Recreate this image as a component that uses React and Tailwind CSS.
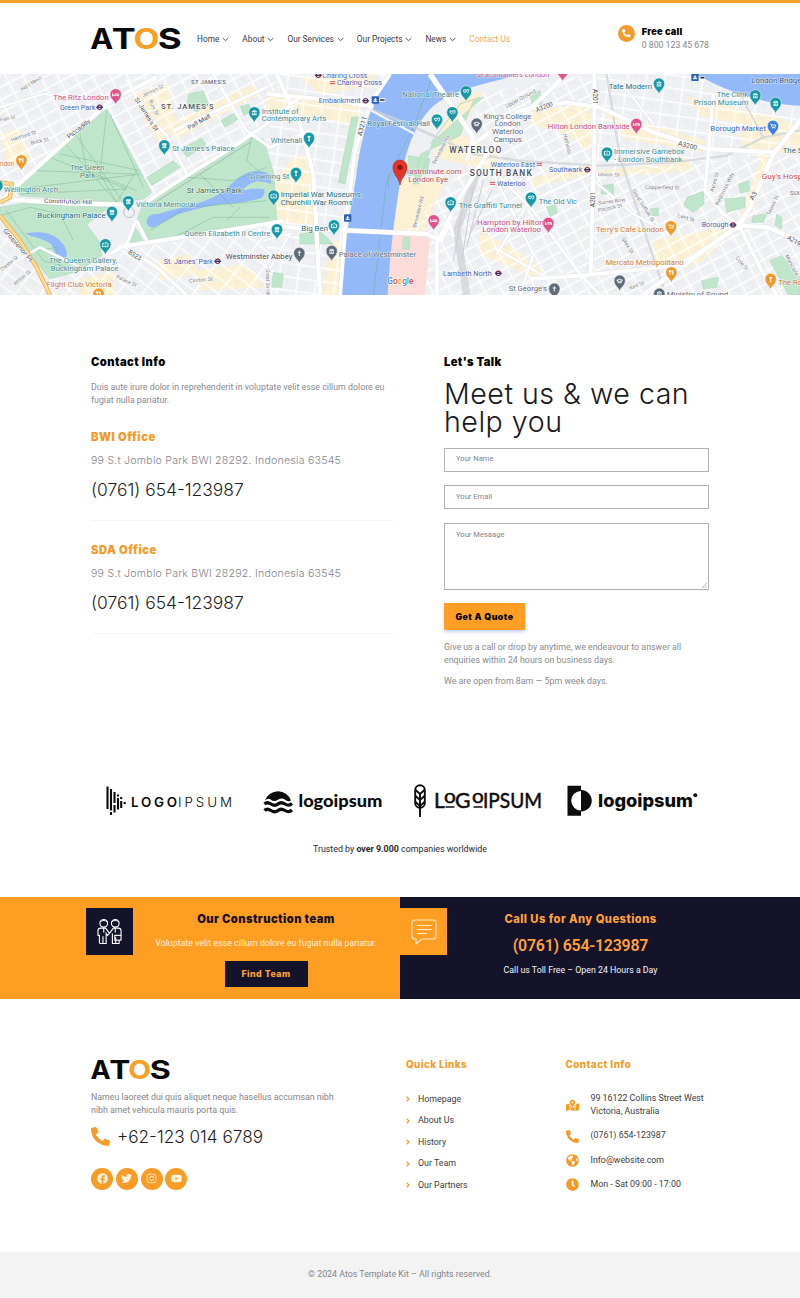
import React from "react";
import {
  FaPhoneAlt, FaMapMarkedAlt, FaGlobeAmericas, FaClock, FaFacebook,
  FaTwitter, FaInstagram, FaYoutube, FaAngleRight,
} from "react-icons/fa";

const ORANGE = "#f79f26";
const SANS = "Roboto, sans-serif";

/* ---------- Brand ---------- */

function AtosLogo({ className }) {
  return (
    <svg viewBox="0 0 90 22" className={`overflow-visible ${className}`} preserveAspectRatio="none">
      <g fontFamily="Inter, sans-serif" fontWeight="650" fontSize="29">
        <text x="-0.7" y="21.3" textLength="23" lengthAdjust="spacingAndGlyphs" fill="#0a0a0c">A</text>
        <text x="20.8" y="21.3" textLength="24" lengthAdjust="spacingAndGlyphs" fill="#0a0a0c">T</text>
        <text x="42.4" y="21.3" textLength="26" lengthAdjust="spacingAndGlyphs" fill={ORANGE}>O</text>
        <text x="66.8" y="21.3" textLength="24" lengthAdjust="spacingAndGlyphs" fill="#0a0a0c">S</text>
      </g>
    </svg>
  );
}

const NAV = ["Home", "About", "Our Services", "Our Projects", "News"];

function Header() {
  return (
    <header className="flex h-[74px] items-start border-t-[3px] border-[#f5a127] bg-white pl-[91px]">
      <AtosLogo className="mt-[25px] h-[22px] w-[90px]" />
      <nav className="mt-[29px] ml-4 flex h-[14px] items-center gap-[13px] text-[8.3px] leading-[14px] text-[#38383a]">
        {NAV.map((n) => (
          <span key={n} className="flex items-center gap-[3px]">
            {n}
            <svg viewBox="0 0 7 5" className="h-[5px] w-[7px]" fill="none" stroke="#444" strokeWidth=".9">
              <path d="M.7 1 3.5 3.7 6.3 1" />
            </svg>
          </span>
        ))}
        <span className="text-[#f0ae5c]">Contact Us</span>
      </nav>
      <div className="mt-[22px] ml-auto mr-[91px] flex gap-[7px]">
        <span className="flex size-[17px] items-center justify-center rounded-full bg-[#f29b2e] text-white">
          <FaPhoneAlt size={8.5} />
        </span>
        <div>
          <p className="h-[14px] font-['Inter'] text-[9.2px] leading-[14px] font-black tracking-[.25px] text-black">Free call</p>
          <p className="h-[13px] text-[8.7px] leading-[13px] text-[#85858a]">0 800 123 45 678</p>
        </div>
      </div>
    </header>
  );
}

/* ---------- Map ---------- */

const TEAL = "#1a97a5";
const TEALT = "#3b8c96";
const GREY = "#5f6b78";
const PINK = "#e0508a";
const AMBER = "#f0982a";

const PARKS = [
  "320,105 455,355 430,375 345,385 60,365 45,338",
  "0,400 70,388 325,400 262,452 300,505 305,545 240,590 150,615 128,590 0,425",
  "430,385 755,185 790,195 822,300 830,440 640,468 445,498 412,435",
  "400,450 430,500 385,505",
  "565,60 610,50 625,90 590,115 562,90",
  "663,140 705,115 715,135 675,160",
  "440,310 520,260 540,280 455,335",
  "545,225 605,192 618,212 560,250",
  "722,98 745,90 755,115 730,122",
  "1055,130 1075,128 1035,330 1015,325",
  "900,480 960,470 1000,510 900,510",
  "820,595 850,600 845,640 815,640",
  "1225,245 1290,255 1280,300 1225,305",
  "1210,490 1230,490 1228,525 1208,525",
  "1805,335 1840,330 1840,360 1803,360",
  "2060,370 2110,352 2112,390 2080,415 2052,395",
  "2175,375 2235,370 2235,400 2180,415",
  "2215,330 2245,320 2250,350 2222,358",
  "2310,560 2345,545 2400,610 2400,663 2365,663",
  "1590,60 1620,50 1628,100 1600,112",
  "1640,400 1665,390 1672,415 1650,428",
  "1950,405 1975,402 1975,425 1952,425",
  "2105,620 2155,610 2150,640 2110,645",
  "2260,425 2300,420 2290,445 2255,445",
  "2330,420 2345,430 2345,465 2325,455",
  "1380,185 1420,80 1450,70 1300,200 1255,330 1240,330 1262,240",
];

const SHOPS = [
  "395,60 500,30 535,160 480,210 440,150",
  "500,150 720,50 760,30 780,60 520,200",
  "800,50 1090,80 1060,160 960,130 800,110",
  "900,10 1130,0 1100,40 960,60",
  "880,250 935,240 945,450 810,450 815,330",
  "990,500 1040,500 1025,663 965,663",
  "1200,315 1330,330 1270,480 1180,480",
  "1400,60 1450,50 1380,180 1500,240 1480,290 1300,250 1330,150",
  "1440,470 1540,520 1640,600 1600,610 1440,540",
  "1590,110 1760,90 1790,180 1760,230 1700,180 1590,150",
  "1810,110 2120,200 2110,235 1880,195",
  "1780,290 2010,270 2060,250 2080,290 1800,310",
  "2050,60 2110,80 2330,130 2400,160 2400,240 2220,230 2240,150 2110,130",
  "1600,340 1770,300 1780,270 1600,310",
  "2210,180 2350,190 2250,430 2215,440 2280,260",
  "1960,500 2220,450 2110,560 2020,600 1960,560",
  "470,560 560,540 600,600 480,620",
  "220,620 340,590 345,663 240,663",
  "0,180 60,160 90,250 20,280",
  "580,590 730,570 800,640 600,650",
];

const ROADS = [
  ["0,385 40,345 210,190 330,80 470,10", 13],
  ["30,376 200,388 380,392", 13],
  ["440,385 520,330 690,225 800,150 900,70", 11],
  ["380,15 430,110 500,185 560,300", 9],
  ["520,170 800,40", 10],
  ["355,520 480,500 800,450 850,440", 12],
  ["408,440 380,510 330,540", 10],
  ["410,440 440,500", 9],
  ["370,515 470,580 560,663", 10],
  ["640,0 740,170 810,220 930,170", 9],
  ["830,0 900,150 940,300 950,480 960,663", 13],
  ["1170,0 1110,90 1065,230 1035,470 1020,663", 11],
  ["800,455 945,465 1280,480 1330,500", 13],
  ["800,60 1020,80 1120,100", 12],
  ["1310,663 1310,510 1380,370 1480,210 1700,0", 13],
  ["1290,0 1420,190 1400,260", 15],
  ["1420,210 1560,110 1700,85 1800,100", 13],
  ["1800,100 1960,175 2120,225 2330,235", 13],
  ["1783,0 1783,200 1772,600", 12],
  ["2140,60 2115,350 2170,420 2220,455", 11],
  ["2400,140 2320,240 2250,400 2220,450 1930,663", 14],
  ["2220,455 2300,460 2400,500", 13],
  ["2220,460 2290,600 2330,663", 11],
  ["1590,615 1740,605 2030,575", 12],
  ["1500,310 1600,410 1740,600 1800,663", 9],
  ["1480,300 1600,540 1560,663", 8],
  ["1770,300 1590,380 1490,540", 8],
  ["1770,310 1900,420 2010,480", 7],
  ["0,590 120,520 280,600", 7],
  ["0,100 130,60 330,80", 7],
  ["790,500 870,480 800,600", 7],
  ["1320,505 1350,450 1360,490", 10],
  ["1480,520 1640,610", 8],
  ["2030,575 2120,520 2220,460", 9],
  ["1860,20 1960,150", 7],
];

const RAILS = [
  ["1590,262 1800,275 2020,265 2180,245 2290,190 2400,170", 7],
  ["1820,0 1860,250 1910,400 1990,640", 7],
  ["1070,90 1200,140 1420,240 1590,265", 8],
  ["1430,300 1370,470 1400,663", 22],
  ["2220,60 2290,190", 5],
];

const PATHS = [
  "320,110 300,300 350,385", "180,240 420,290", "230,185 370,385", "110,290 400,300",
  "60,345 420,300", "240,180 260,290 410,350", "330,120 430,340", "150,250 380,345 60,360",
  "200,215 350,385", "410,290 350,385", "450,470 560,400 800,380", "560,310 700,320 800,280",
  "520,490 640,430 810,430", "755,190 740,260 820,330", "600,300 700,400", "0,425 90,400 180,420 220,500",
  "20,410 130,560 240,590", "110,530 170,520 180,590", "720,400 680,440", "1300,0 1240,160 1160,320 1120,663",
  "1440,70 1380,90 1290,210", "1165,345 1165,305 1205,305",
];

// [text, x, y, width, colour, size, wide]: "wide" districts stretch by spacing only
const LABELS = [
  ["The Ritz London", 160, 78, 166, "#c94a83"],
  ["Green Park", 180, 108, 106, "#4b62ad", 21],
  ["ST. JAMES'S", 483, 104, 158, "#4d5360", 23, true],
  ["ST JAMES'S", 573, 30, 105, "#6a6f78", 18, true],
  ["St James's Palace", 516, 231, 188, TEALT],
  ["The Green", 211, 289, 102, "#4f8064"],
  ["Park", 240, 312, 46, "#4f8064"],
  ["St James's Park", 560, 358, 166, "#356b4c"],
  ["Wellington Arch", 12, 355, 162, TEALT],
  ["Victoria Memorial", 408, 400, 178, TEALT],
  ["Buckingham Palace", 112, 431, 205, "#256c78"],
  ["The Queen's Gallery,", 147, 567, 204, TEALT],
  ["Buckingham Palace", 152, 590, 203, TEALT],
  ["Flight Club Victoria", 140, 639, 195, "#cf7d33"],
  ["Queen Elizabeth II Centre", 553, 485, 258, TEALT],
  ["St. James' Park", 491, 570, 148, "#4b62ad"],
  ["Westminster Abbey", 677, 555, 200, "#414b58"],
  ["ndon", 0, 276, 42, "#cf7d33"],
  ["Institute of", 785, 119, 111, TEALT],
  ["Contemporary Arts", 785, 142, 194, TEALT],
  ["Whitehall", 812, 207, 94, TEALT],
  ["Downing St", 751, 315, 117, TEALT],
  ["Imperial War Museums,", 842, 370, 245, "#1e6f7b"],
  ["Churchill War Rooms", 842, 394, 216, "#1e6f7b"],
  ["Big Ben", 904, 471, 80, "#1e6f7b"],
  ["Palace of Westminster", 1016, 548, 232, GREY],
  ["Charing Cross", 967, 11, 135, "#5268ad", 21],
  ["Charing Cross", 1011, 33, 135, "#4b62ad", 21],
  ["Embankment", 956, 87, 126, "#4b62ad", 22],
  ["National Theatre", 1207, 69, 170, TEALT],
  ["Royal Festival Hall", 1102, 157, 188, "#2d8396"],
  ["Seacontainers London", 1428, 9, 220, "#d05088"],
  ["King's College", 1451, 134, 143, GREY],
  ["London", 1484, 157, 78, GREY],
  ["Waterloo", 1476, 180, 94, GREY],
  ["Campus", 1481, 203, 84, GREY],
  ["WATERLOO", 1348, 238, 156, "#474c58", 25, true],
  ["SOUTH BANK", 1409, 307, 186, "#474c58", 25, true],
  ["Waterloo East", 1472, 278, 133, "#4b62ad", 21],
  ["Waterloo", 1491, 335, 86, "#4b62ad", 21],
  ["lastminute.com", 1221, 301, 164, "#b84e49"],
  ["London Eye", 1225, 325, 119, "#b84e49"],
  ["The Graffiti Tunnel", 1376, 402, 190, TEALT],
  ["Hampton by Hilton", 1431, 452, 200, "#c94a83"],
  ["London Waterloo", 1447, 475, 176, "#c94a83"],
  ["The Old Vic", 1616, 389, 115, TEALT],
  ["Lambeth North", 1329, 605, 146, "#4b62ad", 22],
  ["St George's", 1526, 652, 115, GREY],
  ["Cathedral, Southwark", 1425, 677, 230, GREY],
  ["Tate Modern", 1826, 46, 130, "#1e6f7b"],
  ["Hilton London Bankside", 1643, 166, 246, "#c94a83"],
  ["Immersive Gamebox", 1842, 241, 211, TEALT],
  ["- London Southbank", 1842, 264, 205, TEALT],
  ["Southwark", 1647, 294, 100, "#4b62ad", 22],
  ["The Clink", 2150, 70, 94, TEALT],
  ["Prison Museum", 2081, 93, 164, TEALT],
  ["London Bridge", 2254, 28, 150, "#384f6b"],
  ["Borough Market", 2131, 171, 167, "#3567c8"],
  ["The Shard", 2348, 238, 106, "#1e6f7b"],
  ["Guy's Hospital", 2285, 316, 155, "#c55055"],
  ["SOUTHWARK", 2370, 362, 110, "#6a6f78", 17],
  ["Borough", 2105, 460, 80, "#4b62ad", 22],
  ["Terry's Cafe London", 1788, 475, 203, "#cf7d33"],
  ["Mercato Metropolitano", 1817, 572, 234, "#cf7d33"],
  ["The Royal", 2335, 633, 100, "#cf7d33"],
  ["Ministry of Sound", 2000, 668, 185, GREY],
];

// [text, x, y, width, size, rotation]
const STREETS = [
  ["Piccadilly", 208, 195, 82, 20, -38], ["St James's St", 403, 76, 115, 19, 57],
  ["Pall Mall", 567, 168, 76, 19, -30], ["Constitution Hill", 132, 386, 144, 18, 2],
  ["Grosvenor Pl", 8, 470, 125, 19, 49], ["B323", 383, 538, 42, 20, 32],
  ["Hertford St", 35, 203, 78, 16, -18], ["Brick St", 93, 212, 55, 16, -12],
  ["Ivan St", 0, 142, 48, 16, -10], ["Hay's Mews", 65, 52, 72, 16, -32],
  ["Jermyn St", 430, 70, 68, 16, -26], ["Bury St", 446, 80, 50, 16, 65],
  ["Chester St", 5, 592, 64, 16, -38], ["Wilton St", 46, 635, 62, 16, -40],
  ["Palace St", 347, 612, 66, 16, 24], ["Caxton St", 567, 626, 72, 16, -5],
  ["Great Smith", 798, 585, 80, 16, 90], ["A3211", 1085, 187, 60, 20, -75],
  ["Belvedere Rd", 1305, 272, 95, 16, -62], ["Belvedere Rd", 1248, 462, 96, 16, -76],
  ["Upper Ground", 1520, 102, 100, 17, -28], ["A3200", 1610, 115, 54, 20, -22],
  ["A201", 1780, 45, 46, 19, 90], ["A201", 1784, 400, 46, 19, -90],
  ["A3200", 2033, 214, 58, 20, 14], ["Hatfields", 1690, 180, 64, 16, 78],
  ["Union St", 1793, 306, 66, 16, 2], ["Copperfield St", 1935, 345, 104, 16, 1],
  ["Surrey Row", 1795, 392, 82, 16, -7], ["Pocock St", 1795, 414, 74, 16, -12],
  ["Great Suffolk St", 1896, 350, 112, 16, 58], ["Lant St", 2032, 428, 52, 16, 18],
  ["Ayres St", 2140, 354, 60, 16, -74], ["Redcross Way", 2155, 395, 108, 16, -64],
  ["A3", 2260, 380, 26, 20, -62], ["Tennis St", 2310, 425, 64, 16, -66],
  ["Silex St", 1864, 494, 54, 16, 58], ["Keit St", 1890, 648, 48, 16, -22],
  ["Cole St", 2206, 552, 50, 16, 50], ["A2198", 2360, 494, 54, 20, 32],
  ["Manciple St", 2355, 545, 90, 16, 62],
];

// [x, tip y, colour, glyph]
const PINS = [
  [347, 92, PINK, "bed"], [493, 245, TEAL, "fort"], [64, 290, AMBER, "food"],
  [763, 146, TEAL, "mus"], [385, 413, TEAL, "fort"], [336, 445, TEAL, "fort"],
  [316, 542, TEAL, "cam"], [-8, 365, TEAL, "fort"], [296, 690, AMBER, "food"],
  [927, 223, TEAL, "tower"], [888, 328, TEAL, "tower"], [821, 396, TEAL, "cam"],
  [1002, 485, TEAL, "cam"], [831, 497, TEAL, "fort"], [898, 568, GREY, "cross"],
  [995, 562, GREY, "mus"], [1398, 83, TEAL, "mask"], [1357, 146, TEAL, "mask"],
  [1311, 168, TEAL, "mask"], [1430, 180, GREY, "cap"], [1352, 416, TEAL, "cam"],
  [1301, 470, PINK, "bed"], [1593, 402, TEAL, "mask"], [1645, 478, PINK, "bed"],
  [1688, 22, PINK, "bed"], [1977, 60, TEAL, "mus"], [1909, 181, PINK, "bed"],
  [1821, 267, TEAL, "cam"], [2266, 95, TEAL, "mus"], [2327, 118, TEAL, "mus"],
  [2319, 187, "#3f7de0", "cart"], [2013, 488, AMBER, "cart"], [2014, 626, AMBER, "food"],
  [1859, 651, GREY, "cap"], [1663, 675, GREY, "cross"], [1978, 690, GREY, "mus"],
  [2312, 646, AMBER, "tower"],
];

const GLYPHS = {
  bed: "M-9 -5V5M-9 2H9V-2H-3M9 2V5",
  fort: "M-6 -6H6V-3H-6ZM-4 -3V4M4 -3V4M-7 6H7M0 -3V5",
  food: "M-4 -8V7M-7 -8V-3H-1V-8M5 7V-7Q2 -5 2 0H5",
  mus: "M-7 -3 0 -7 7 -3ZM-5 0V5M0 0V5M5 0V5M-7 6H7",
  cam: "M-8 -4H-3L-1 -6H3L4 -4H8V6H-8ZM0 -1V3",
  tower: "M0 -8V7M-5 -5H5M-3 -2H3M-3 7H3",
  cross: "M0 -8V8M-5 -3H5",
  mask: "M-7 0V-5H1V0Q-3 5 -7 0M2 -6H8V0Q6 4 3 3",
  cap: "M-9 -2 0 -6 9 -2 0 2ZM-5 1V5H5V1",
  cart: "M-8 -6H-5L-3 3H6L8 -4H-4M-2 6H0M5 6H7",
};

function Pin({ x, y, color, glyph }) {
  return (
    <g transform={`translate(${x} ${y - 30})`}>
      <path d="M0 31C-2 18-17 15-17-1A17 17 0 0 1 17-1C17 15 2 18 0 31Z" fill={color} stroke="#fff" strokeWidth="1.5" />
      <path d={GLYPHS[glyph]} fill="none" stroke="#f2fbfb" strokeWidth="2.8" />
    </g>
  );
}

function Roundel({ x, y }) {
  return (
    <g transform={`translate(${x} ${y})`}>
      <circle r="6.5" fill="#f3e8ee" stroke="#7b2950" strokeWidth="3.4" />
      <path d="M-10 0H10" stroke="#2f3566" strokeWidth="4" />
    </g>
  );
}

function MapBanner() {
  return (
    <svg viewBox="0 0 2400 663" className="block h-[221px] w-full bg-[#eef0f3]" preserveAspectRatio="none" fontFamily={SANS}>
      <defs>
        <pattern id="g1" width="46" height="34" patternUnits="userSpaceOnUse" patternTransform="rotate(-28)">
          <path d="M0 2H46M12 2V34" stroke="#fff" strokeWidth="4" />
          <path d="M30 12H40V24" stroke="#e2e5ea" strokeWidth="2" fill="none" />
        </pattern>
        <pattern id="g2" width="56" height="40" patternUnits="userSpaceOnUse" patternTransform="rotate(8)">
          <path d="M0 2H56M18 2V40" stroke="#fff" strokeWidth="4" />
          <path d="M28 14H46V30" stroke="#e2e5ea" strokeWidth="2" fill="none" />
        </pattern>
        <pattern id="g3" width="60" height="38" patternUnits="userSpaceOnUse" patternTransform="rotate(38)">
          <path d="M0 2H60M22 2V38" stroke="#fff" strokeWidth="4" />
          <path d="M34 14H50V26" stroke="#e2e5ea" strokeWidth="2" fill="none" />
        </pattern>
      </defs>
      <rect width="2400" height="663" fill="#eef0f3" />
      {SHOPS.map((p) => <polygon key={p} points={p} fill="#fcf1d3" />)}
      <path d="M0 0H840L800 150 440 385 45 345 0 385Z" fill="url(#g1)" />
      <path d="M0 430 150 615 300 540 830 450 830 663H0Z" fill="url(#g3)" />
      <path d="M840 0H1170L1020 663H800V200Z" fill="url(#g2)" />
      <path d="M1430 60 1780 0V663H1180L1210 480 1420 250Z" fill="url(#g1)" />
      <path d="M1780 0H2140L2400 110V240L1780 300Z" fill="url(#g2)" />
      <path d="M1780 300 2400 240V663H1780Z" fill="url(#g1)" />
      <path d="M1178 480 1290 490 1275 663H1160Z" fill="#fbdcd9" />
      {PARKS.map((p) => <polygon key={p} points={p} fill="#bfe5cb" stroke="#a6d5b5" strokeWidth="1.5" />)}
      <path d="M300 420 380 400 410 440 385 505 320 530 262 452Z" fill="#eef0f3" />
      <g fill="#94b9f8">
        <path d="M1170 0C1120 70 1085 170 1068 310C1050 420 1030 540 1022 663H1163C1168 560 1182 440 1198 340C1215 230 1250 120 1330 75C1400 35 1470 28 1560 0Z" />
        <path d="M2085 0C2150 35 2200 55 2260 72C2310 88 2360 94 2400 95V0Z" />
        <path d="M440 445Q440 418 475 420C540 400 600 390 640 370C690 345 720 290 770 292Q800 290 812 306V330Q790 320 770 322 740 330 728 350 760 340 790 345 800 355 785 372 740 385 700 388C640 390 590 405 530 422 500 440 480 450 462 460Q442 462 440 445Z" />
        <path d="M76 478C120 470 155 475 178 498 200 520 205 540 196 552H178C160 545 165 520 150 508 120 490 95 490 76 478Z" />
      </g>
      {PATHS.map((p) => (
        <polyline key={p} points={p} fill="none" stroke="#69a982" strokeOpacity=".65" strokeWidth="1.8" />
      ))}
      <path d="M450 395 750 205" stroke="#9aa3a0" strokeWidth="2" />
      {RAILS.map(([p, w]) => (
        <polyline key={p} points={p} fill="none" stroke="#cfd1d6" strokeOpacity=".75" strokeWidth={w} />
      ))}
      {ROADS.map(([p, w]) => (
        <polyline key={p} points={p} fill="none" stroke="#dadde2" strokeWidth={w + 2} strokeLinejoin="round" />
      ))}
      {ROADS.map(([p, w]) => (
        <polyline key={p} points={p} fill="none" stroke="#fff" strokeWidth={w} strokeLinejoin="round" />
      ))}
      <path d="M1095 100 1290 205" stroke="#eef0f4" strokeWidth="7" />
      <path d="M0 325 35 330 30 370 0 385M0 425 60 500 110 580 150 663" fill="none" stroke="#e9b04e" strokeWidth="13" />
      <path d="M0 325 35 330 30 370 0 385M0 425 60 500 110 580 150 663" fill="none" stroke="#fbdc95" strokeWidth="8" />
      <circle cx="387" cy="415" r="16" fill="#eef0f3" stroke="#b9bdc4" strokeWidth="3" />
      <path d="M1392 380 1360 560M1420 340 1385 560M1450 320 1400 520M1475 350 1410 480" stroke="#c9ccd3" strokeWidth="3" />

      {STREETS.map(([t, x, y, w, s, r]) => (
        <text key={t + x} transform={`translate(${x} ${y}) rotate(${r})`} textLength={w} lengthAdjust="spacingAndGlyphs"
          fontSize={s} fill={s > 17 ? "#4b4f57" : "#7a7e86"} stroke="#fff" strokeWidth="3" paintOrder="stroke">{t}</text>
      ))}
      {LABELS.map(([t, x, y, w, c, s, wide]) => (
        <text key={t + x + y} x={x} y={y} textLength={w} lengthAdjust={wide ? "spacing" : "spacingAndGlyphs"}
          fontSize={s || 23} fontWeight={wide ? 500 : 420} fill={c} stroke="#fff" strokeOpacity=".75" strokeWidth="3" paintOrder="stroke">{t}</text>
      ))}
      {PINS.map(([x, y, c, g]) => <Pin key={`${x}-${y}`} x={x} y={y} color={c} glyph={g} />)}
      {[[299, 100], [653, 562], [1097, 80], [955, 4], [1495, 598], [1762, 287], [2199, 453]].map(([x, y]) => (
        <Roundel key={x} x={x} y={y} />
      ))}
      {[[998, 26], [1478, 328], [1618, 271]].map(([x, y]) => (
        <path key={x} d={`M${x - 8} ${y - 3}H${x + 8}M${x - 8} ${y + 3}H${x + 8}`} stroke="#d4514c" strokeWidth="3" />
      ))}
      {[[1126, 78], [1043, 432], [2085, 10]].map(([x, y]) => (
        <g key={x}>
          <rect x={x - 11} y={y - 11} width="22" height="22" rx="3" fill="#2e62b4" />
          <path d={`M${x - 6} ${y + 4}H${x + 6}M${x} ${y - 6}V${y + 4}M${x - 4} ${y - 1}H${x + 4}`} stroke="#fff" strokeWidth="3" />
        </g>
      ))}
      <path d="M1138 78H1156M2100 11H2114" stroke="#fff" strokeWidth="10" />
      <path d="M1140 78H1154M2101 11H2113" stroke="#333" strokeWidth="5" />

      <path d="M1200 333C1197 310 1179 302 1179 279A21 21 0 0 1 1221 279C1221 302 1203 310 1200 333Z" fill="#e5352b" stroke="#b3261e" strokeWidth="2" />
      <circle cx="1200" cy="280" r="8" fill="#8c1712" />
      <text x="1162" y="629" fontSize="26" fontWeight="500" textLength="78" lengthAdjust="spacingAndGlyphs" stroke="#fff" strokeWidth="3" paintOrder="stroke">
        <tspan fill="#4285f4">G</tspan><tspan fill="#ea4335">o</tspan><tspan fill="#e8a90c">o</tspan>
        <tspan fill="#4285f4">g</tspan><tspan fill="#34a853">l</tspan><tspan fill="#ea4335">e</tspan>
      </text>
    </svg>
  );
}

/* ---------- Contact ---------- */

function Office({ name }) {
  return (
    <div className="border-b border-[#f6f6f7] font-['Inter']">
      <h3 className="h-4 text-[11.2px] leading-4 font-black tracking-[.5px] text-[#f39b2a]">{name}</h3>
      <p className="mt-2 h-4 text-[10.6px] leading-4 font-light tracking-[.22px] whitespace-nowrap text-[#858589]">99 S.t Jomblo Park BWI 28292. Indonesia 63545</p>
      <p className="mt-[9px] mb-[18px] h-6 text-[17.4px] leading-6 font-light text-[#1c1c1e]">(0761) 654-123987</p>
    </div>
  );
}

function Contact() {
  return (
    <section className="flex h-[476px] pt-[59px] pl-[91px]">
      <div className="w-[303px]">
        <h2 className="h-4 font-['Inter'] text-[11.2px] leading-4 font-black tracking-[.45px] text-black">Contact Info</h2>
        <p className="mt-[11px] mb-[22px] text-[8.82px] leading-[13px] whitespace-nowrap text-[#8a8a8e]">
          Duis aute irure dolor in reprehenderit in voluptate velit esse cillum dolore eu<br />fugiat nulla pariatur.
        </p>
        <Office name="BWI Office" />
        <div className="h-[21px]" />
        <Office name="SDA Office" />
      </div>
      <div className="ml-[50px] w-[265px]">
        <h2 className="h-4 font-['Inter'] text-[11.2px] leading-4 font-black tracking-[.35px] text-black">Let's Talk</h2>
        <p className="mt-[10px] font-['Inter'] text-[28.6px] leading-7 font-light tracking-[.5px] whitespace-nowrap text-[#19191b]">
          Meet us &amp; we can<br />help you
        </p>
        <div className="mt-[11.5px] flex flex-col gap-[13.5px]">
          <input placeholder="Your Name" className="h-6 border border-[#b2b2b6] px-[11px] pb-[2px] text-[7.6px] placeholder:text-[#85858a]" />
          <input placeholder="Your Email" className="h-6 border border-[#b2b2b6] px-[11px] pb-[2px] text-[7.6px] placeholder:text-[#85858a]" />
          <div className="relative h-[67px]">
            <textarea placeholder="Your Mesaage" className="block h-[67px] w-full resize-none border border-[#b2b2b6] px-[11px] py-[4px] text-[7.6px] leading-[13px] placeholder:text-[#85858a]" />
            <svg viewBox="0 0 5 5" className="absolute right-[2px] bottom-[2px] size-[5px]" stroke="#8d8d91" strokeWidth=".6">
              <path d="M0 5 5 0M2.7 5 5 2.7" />
            </svg>
          </div>
        </div>
        <button className="mt-[13.5px] block h-[27px] w-[81px] bg-[#ff9e22] font-['Inter'] text-[8.8px] font-black tracking-[.48px] whitespace-nowrap text-black shadow-[0_2px_3px_rgba(80,130,200,.35)]">
          Get A Quote
        </button>
        <p className="mt-[11px] text-[8.83px] leading-[13px] whitespace-nowrap text-[#8a8a8e]">
          Give us a call or drop by anytime, we endeavour to answer all<br />enquiries within 24 hours on business days.
        </p>
        <p className="mt-[8px] text-[8.83px] leading-[13px] text-[#8a8a8e]">We are open from 8am — 5pm week days.</p>
      </div>
    </section>
  );
}

/* ---------- Partner logos ---------- */

function Partners() {
  return (
    <section className="flex h-[126px] flex-col pt-[13px]">
      <div className="ml-[106px] flex items-center text-[#0c0c0d]">
        <svg viewBox="0 0 126 34" className="h-[34px] w-[126px] overflow-visible">
          <path d="M1.5 2.5V25M5 5V26.5M5 28V31M8.5 8V19M8.5 21V28.5M12 10.5V12.5M12 14V25.5M15.2 13V15M15.2 17V24M18.7 18V20"
            stroke="currentColor" strokeWidth="2.1" />
          <g fontFamily="Inter, sans-serif" fontSize="13.4" fill="currentColor">
            <text x="25" y="22.6" fontWeight="600" textLength="46" lengthAdjust="spacing">LOGO</text>
            <text x="72" y="22.6" fontWeight="300" textLength="54" lengthAdjust="spacing">IPSUM</text>
          </g>
        </svg>
        <svg viewBox="0 0 119 34" className="ml-[32px] h-[34px] w-[119px] overflow-visible">
          <path d="M1 16.5A13.5 12.5 0 0 1 27 16.5Q24 18.3 21 15.8T14 15.8 7 15.8 1 16.5Z" fill="currentColor" />
          <path d="M.5 20Q3 17.5 7 20T14 20 21 20 28 19.5M.5 26.5Q3 24 7 26.5T14 26.5 21 26.5 28 26" fill="none" stroke="currentColor" strokeWidth="3.2" />
          <text x="34.5" y="23.4" fontFamily="Lato, sans-serif" fontWeight="900" fontSize="16" textLength="84" lengthAdjust="spacingAndGlyphs" fill="currentColor">logoipsum</text>
        </svg>
        <svg viewBox="0 0 128 34" className="ml-[30.5px] h-[34px] w-[128px] overflow-visible">
          <rect x="1.2" y="1.3" width="9.6" height="22.5" rx="4.8" fill="none" stroke="currentColor" strokeWidth="1.9" />
          <path d="M6 9V33M1.5 6 6 10 10.5 6M1.5 12 6 16 10.5 12M1.5 18 6 22 10.5 18" fill="none" stroke="currentColor" strokeWidth="1.9" />
          <g fontFamily="Lato, sans-serif" fontWeight="400" fill="currentColor" stroke="currentColor" strokeWidth=".5">
            <text x="20" y="23.7" fontSize="20.8">L</text>
            <text x="30" y="19.2" fontSize="18.5" textLength="11.8" lengthAdjust="spacingAndGlyphs">o</text>
            <text x="41" y="23.7" fontSize="20.8" textLength="15.5" lengthAdjust="spacingAndGlyphs">G</text>
            <text x="58" y="19.2" fontSize="18.5" textLength="11.8" lengthAdjust="spacingAndGlyphs">o</text>
            <text x="69" y="23.7" fontSize="20.8" textLength="59" lengthAdjust="spacingAndGlyphs">IPSUM</text>
          </g>
          <path d="M31.5 23H40.5M59.5 23H68.5" stroke="currentColor" strokeWidth="1.6" />
        </svg>
        <svg viewBox="0 0 131 34" className="ml-[25px] h-[34px] w-[131px] overflow-visible">
          <path d="M.5 1.7H14V7A9.5 9.5 0 0 0 14 26.5V31.7H.5Z" fill="currentColor" />
          <path d="M14 6A10.5 10.5 0 0 1 14 27.5Z" fill="currentColor" />
          <text x="31" y="23.3" fontFamily="Inter, sans-serif" fontWeight="800" fontSize="18" textLength="95" lengthAdjust="spacingAndGlyphs" fill="currentColor">logoipsum</text>
          <circle cx="128.3" cy="11.3" r="2" fill="currentColor" />
        </svg>
      </div>
      <p className="mt-[24px] text-center text-[8.85px] leading-[14px] text-[#2a2a2c]">
        Trusted by <b className="font-bold">over 9.000</b> companies worldwide
      </p>
    </section>
  );
}

/* ---------- Call band ---------- */

function CallBand() {
  return (
    <section className="flex h-[102px]">
      <div className="flex w-1/2 bg-[#ff9e22] pt-[11px] pl-[85.5px]">
        <div className="flex h-[47px] w-[47px] shrink-0 items-center justify-center bg-[#14132a]">
          <svg viewBox="0 0 26 28" className="h-[27px] w-[25px]" fill="none" stroke="#fff" strokeWidth="1.15">
            <circle cx="7" cy="5.5" r="4" />
            <circle cx="19" cy="5.5" r="4" />
            <path d="M3 4Q7 1 11 4M15 4Q19 1 23 4" />
            <path d="M2.5 26.5V18H1V13Q1 10.5 4 10.5H9L13 16 17 10.5H22Q25 10.5 25 13V18M13 16 11 18 9.5 16V26.5H3M6.2 19V26M7 11V15M19 11V15M16 16V26.5H23V23M19.5 20V26" />
            <rect x="18.5" y="18" width="6.5" height="5" />
          </svg>
        </div>
        <div className="flex w-[267px] flex-col items-center">
          <h3 className="mt-[3px] h-4 font-['Inter'] text-[11.2px] leading-4 font-black tracking-[.45px] whitespace-nowrap text-[#15101a]">Our Construction team</h3>
          <p className="mt-[9px] h-[14px] text-[8.84px] leading-[14px] whitespace-nowrap text-[#fff0d4]">Voluptate velit esse cillum dolore eu fugiat nulla pariatur.</p>
          <button className="mt-[10.5px] h-[26px] w-[83px] bg-[#14132a] font-['Inter'] text-[8.8px] font-extrabold tracking-[.5px] text-[#ffa23a]">Find Team</button>
        </div>
      </div>
      <div className="flex w-1/2 bg-[#14132a] pt-[11px]">
        <div className="flex h-[47px] w-[47px] shrink-0 items-center justify-center bg-[#ff9e22]">
          <svg viewBox="0 0 26 28" className="h-[28px] w-[26px]" fill="none" stroke="#ffeccb" strokeWidth="1.1">
            <path d="M4 2H22Q25 2 25 5V18Q25 21 22 21H11L5 26V21H4Q1 21 1 18V5Q1 2 4 2ZM6 7.5H20.5M6 11.5H20.5M6 15.5H16" />
          </svg>
        </div>
        <div className="flex w-[267px] flex-col items-center">
          <h3 className="mt-[3px] h-4 font-['Inter'] text-[11.2px] leading-4 font-extrabold tracking-[.45px] whitespace-nowrap text-[#ffa23a]">Call Us for Any Questions</h3>
          <p className="mt-[9px] h-5 text-[15.9px] leading-5 font-semibold tracking-[-.2px] text-[#ffa23a]">(0761) 654-123987</p>
          <p className="mt-[7px] h-[14px] text-[8.8px] leading-[14px] text-[#f3f3f6]">Call us Toll Free – Open 24 Hours a Day</p>
        </div>
      </div>
    </section>
  );
}

/* ---------- Footer ---------- */

const LINKS = ["Homepage", "About Us", "History", "Our Team", "Our Partners"];
const SOCIALS = [FaFacebook, FaTwitter, FaInstagram, FaYoutube];

function ContactRow({ icon: Icon, children, className }) {
  return (
    <div className={`flex items-center ${className}`}>
      <span className="flex w-[25px] text-[#f59b28]"><Icon size={13} /></span>
      <span className="text-[8.83px] leading-[13.5px] whitespace-nowrap text-[#3c3c40]">{children}</span>
    </div>
  );
}

function Footer() {
  return (
    <footer>
      <div className="flex h-[253px] pt-[57px] pl-[91px]">
        <div className="w-[315px] pt-[4px]">
          <AtosLogo className="h-[20px] w-[79px]" />
          <p className="mt-[10.5px] text-[8.83px] leading-[13px] whitespace-nowrap text-[#85858a]">
            Nameu laoreet dui quis aliquet neque hasellus accumsan nibh<br />nibh amet vehicula mauris porta quis.
          </p>
          <div className="mt-[8px] flex h-6 items-center gap-[7px]">
            <FaPhoneAlt size={19} className="text-[#f59b28]" />
            <span className="font-['Inter'] text-[17.2px] leading-6 font-light whitespace-nowrap text-[#1c1c1e]">+62-123 014 6789</span>
          </div>
          <div className="mt-[19px] flex gap-[2.8px]">
            {SOCIALS.map((Icon, i) => (
              <span key={i} className="flex size-[22px] items-center justify-center rounded-full bg-[#f79c26] text-[#fff3dc]">
                <Icon size={11} />
              </span>
            ))}
          </div>
        </div>
        <div className="w-[159.5px]">
          <h4 className="mt-px h-4 font-['Inter'] text-[9.8px] leading-4 font-extrabold tracking-[.42px] text-[#f39b2a]">Quick Links</h4>
          <ul className="mt-[15.5px]">
            {LINKS.map((l) => (
              <li key={l} className="flex h-[21.5px] items-center text-[8.83px] text-[#3c3c40]">
                <FaAngleRight size={8} className="mr-[6px] -ml-[2px] text-[#f59b28]" />
                {l}
              </li>
            ))}
          </ul>
        </div>
        <div>
          <h4 className="mt-px h-4 font-['Inter'] text-[9.8px] leading-4 font-extrabold tracking-[.5px] text-[#f39b2a]">Contact Info</h4>
          <ContactRow icon={FaMapMarkedAlt} className="mt-[18px] h-7">99 16122 Collins Street West<br />Victoria, Australia</ContactRow>
          <ContactRow icon={FaPhoneAlt} className="mt-[5px] h-[24.2px]">(0761) 654-123987</ContactRow>
          <ContactRow icon={FaGlobeAmericas} className="h-[24.2px]">Info@website.com</ContactRow>
          <ContactRow icon={FaClock} className="h-[24.2px]">Mon - Sat 09:00 - 17:00</ContactRow>
        </div>
      </div>
      <div className="flex h-[46px] items-center justify-center bg-[#f3f3f3] text-[8.83px] text-[#85858a]">
        © 2024 Atos Template Kit – All rights reserved.
      </div>
    </footer>
  );
}

export default function App() {
  return (
    <div className="w-[800px] bg-white font-['Roboto']">
      <Header />
      <MapBanner />
      <Contact />
      <Partners />
      <CallBand />
      <Footer />
    </div>
  );
}
